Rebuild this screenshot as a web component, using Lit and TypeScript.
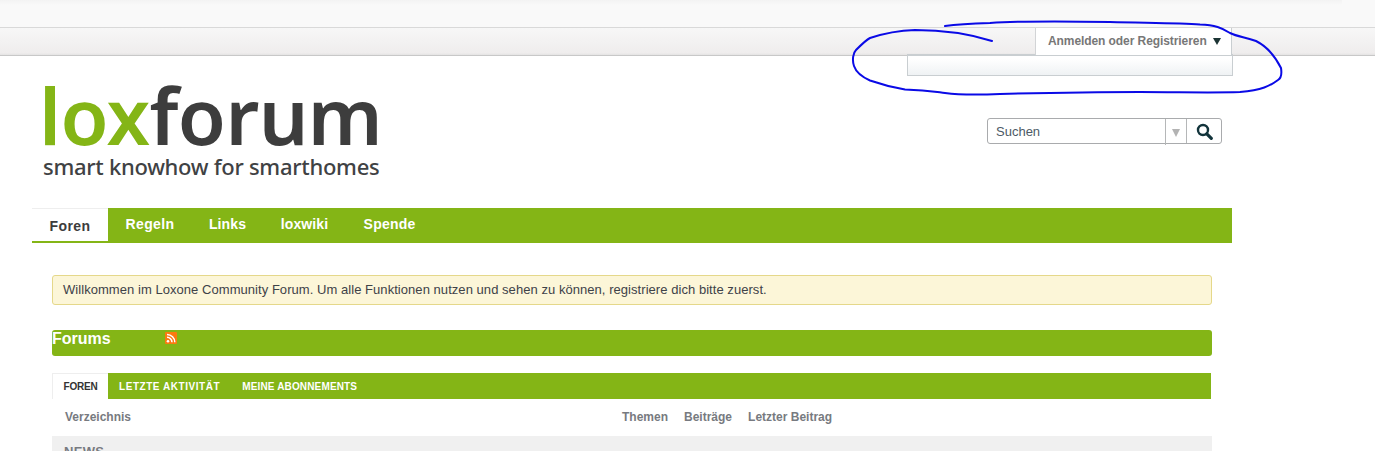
import { LitElement, html, css, svg } from "lit";
import { customElement } from "lit/decorators.js";

const SCRIBBLE =
  "M945 26 C960 24 975 23.5 990 23 C1020 21 1060 21 1110 22 C1150 23 1180 23 1200 24.5 C1215 25 1222 28 1230 33 C1238 37 1246 37 1256 41 C1268 47 1276 58 1281 68 C1282 74 1281 78 1278 80 C1270 86 1262 90 1240 92 C1210 93 1180 92 1140 92 C1100 92 1040 93 1000 94 C975 95 960 95 945 93 C930 91 925 90 905 89.5 C890 87 880 84 870 80.5 C860 76 856 72 854 66 C852 60 853 53 856 50 C862 44 866 40 870 38 C885 33 900 30.5 915 30 C945 30 970 34 992 41";

@customElement("app-root")
export class AppRoot extends LitElement {
  static styles = css`
    :host {
      display: block;
      position: relative;
      width: 1375px;
      height: 451px;
      overflow: hidden;
      background: #fff;
      font-family: "Liberation Sans", Arial, sans-serif;
    }
    .strip {
      height: 27px;
      background: #f9f9f9;
      border-bottom: 1px solid #d9d9d9;
    }
    .strip-shade {
      width: 1342px;
      height: 5px;
      background: linear-gradient(#f3f3f3, #f9f9f9);
    }
    .bar {
      position: relative;
      height: 27px;
      background: linear-gradient(#f7f7f7, #efeded 92%, #e4e3e3);
      border-bottom: 1px solid #c8c8c8;
    }
    .login {
      position: absolute;
      z-index: 2;
      left: 1035px;
      top: 0;
      width: 197px;
      height: 27px;
      box-sizing: border-box;
      background: #fff;
      border-left: 1px solid #d2d4d6;
      border-right: 1px solid #c9ced1;
      padding: 7px 0 0 12px;
      font-size: 12px;
      font-weight: bold;
      line-height: 13px;
      letter-spacing: -0.08px;
      color: #777;
      display: flex;
      gap: 6px;
    }
    .arrow {
      width: 0;
      height: 0;
      margin-top: 3px;
      border-left: 4px solid transparent;
      border-right: 4px solid transparent;
      border-top: 7px solid #1c3434;
    }
    .dropdown {
      position: absolute;
      z-index: 1;
      left: 907px;
      top: 26px;
      width: 326px;
      height: 22px;
      box-sizing: border-box;
      background: linear-gradient(#fff 15%, #eff2f4);
      border: 1px solid #c9ced1;
      border-top-width: 2px;
    }
    .page {
      width: 1200px;
      margin-left: 32px;
    }
    .head {
      height: 152px;
      display: flex;
      justify-content: space-between;
      align-items: flex-start;
    }
    .logo {
      padding: 24px 0 0 11px;
      font-family: "Noto Sans", "Open Sans", sans-serif;
    }
    .logo-main {
      font-size: 78px;
      line-height: 70px;
      font-weight: 600;
      letter-spacing: -0.6px;
      color: #3d3d3d;
      margin-left: -4px;
    }
    .logo-main span {
      color: #84b516;
    }
    .logo-sub {
      font-size: 22px;
      line-height: 26px;
      font-weight: 500;
      letter-spacing: -0.28px;
      color: #3f4244;
      margin-top: 3px;
    }
    .search {
      margin: 62px 10px 0 0;
      width: 235px;
      height: 26px;
      box-sizing: border-box;
      border: 1px solid #a9abad;
      border-radius: 3px;
      display: flex;
      font-size: 13px;
      color: #4d5a66;
      background: #fff;
    }
    .search-text {
      flex: 1;
      padding-left: 8px;
      line-height: 25px;
    }
    .search-drop {
      width: 20px;
      margin-bottom: -2px;
      border-left: 1px solid #b5b7b8;
      display: flex;
      align-items: center;
      justify-content: center;
    }
    .search-drop i {
      width: 0;
      height: 0;
      margin-top: 2px;
      border-left: 4px solid transparent;
      border-right: 4px solid transparent;
      border-top: 8px solid #b3b3b3;
    }
    .search-btn {
      width: 34px;
      border-left: 1px solid #b5b7b8;
      display: flex;
      align-items: center;
      justify-content: center;
    }
    nav {
      display: flex;
      height: 35px;
      background: #84b516;
      font-size: 14px;
      font-weight: bold;
      letter-spacing: 0.4px;
      color: #fff;
    }
    nav a {
      text-align: center;
      line-height: 32px;
    }
    nav a.w-foren { width: 76px; }
    nav a.w-regeln { width: 84px; }
    nav a.w-links { width: 71px; letter-spacing: 0.1px; }
    nav a.w-wiki { width: 83px; letter-spacing: 0.1px; }
    nav a.w-spende { width: 87px; letter-spacing: 0.2px; }
    nav a.on {
      height: 33px;
      background: #fff;
      color: #3c3c3c;
      line-height: 34px;
      border-top: 1px solid #eee;
      box-sizing: border-box;
    }
    .content {
      padding: 32px 20px 0;
    }
    .notice {
      height: 30px;
      box-sizing: border-box;
      background: #fcf6d8;
      border: 1px solid #e5d88a;
      border-radius: 3px;
      padding-left: 10px;
      font-size: 13px;
      letter-spacing: 0.05px;
      line-height: 28px;
      color: #3e4248;
    }
    .forums {
      margin-top: 25px;
      height: 26px;
      background: #84b516;
      border-radius: 3px;
      display: flex;
      align-items: flex-start;
      color: #fff;
      font-size: 16px;
      font-weight: bold;
      line-height: 18px;
    }
    .forums b {
      width: 113px;
    }
    .rss {
      margin-top: 2px;
    }
    .tabs {
      margin: 17px 1px 0 0;
      height: 26px;
      background: #84b516;
      display: flex;
      font-size: 10px;
      font-weight: bold;
      color: #fff;
      text-transform: uppercase;
    }
    .tabs a {
      padding: 0 11px;
      line-height: 27px;
    }
    .tabs a.t-recent { letter-spacing: 0.55px; }
    .tabs a.t-subs { letter-spacing: 0.15px; }
    .tabs a.on {
      width: 56px;
      padding: 0;
      text-align: center;
      background: #fff;
      color: #333;
      box-sizing: border-box;
      border-top: 1px solid #eee;
      border-left: 1px solid #eee;
      line-height: 25px;
      letter-spacing: -0.2px;
    }
    .cols {
      display: flex;
      gap: 16px;
      height: 37px;
      padding-left: 13px;
      font-size: 12px;
      font-weight: bold;
      line-height: 36px;
      color: #777a80;
    }
    .cols .dir {
      width: 541px;
    }
    .news {
      height: 40px;
      background: #f0f0f0;
      padding: 8px 0 0 12px;
      font-size: 13px;
      font-weight: bold;
      color: #777a80;
      letter-spacing: 0.3px;
    }
    .scribble {
      position: absolute;
      z-index: 3;
      left: 0;
      top: 0;
      pointer-events: none;
    }
  `;

  render() {
    return html`
      <div class="strip"><div class="strip-shade"></div></div>
      <div class="bar">
        <div class="login">Anmelden oder Registrieren <span class="arrow"></span></div>
        <div class="dropdown"></div>
      </div>
      <div class="page">
        <header class="head">
          <div class="logo">
            <div class="logo-main"><span>lox</span>forum</div>
            <div class="logo-sub">smart knowhow for smarthomes</div>
          </div>
          <div class="search">
            <div class="search-text">Suchen</div>
            <div class="search-drop"><i></i></div>
            <div class="search-btn">
              <svg width="17" height="17" viewBox="0 0 17 17" fill="none" stroke="#12343b">
                <circle cx="7" cy="7" r="5" stroke-width="2.4"></circle>
                <path d="M10.8 10.8 L15.3 15.3" stroke-width="3.2" stroke-linecap="round"></path>
              </svg>
            </div>
          </div>
        </header>
        <nav>
          <a class="on w-foren">Foren</a><a class="w-regeln">Regeln</a><a class="w-links">Links</a><a class="w-wiki">loxwiki</a><a class="w-spende">Spende</a>
        </nav>
        <div class="content">
          <div class="notice">
            Willkommen im Loxone Community Forum. Um alle Funktionen nutzen und sehen zu können, registriere dich bitte zuerst.
          </div>
          <div class="forums">
            <b>Forums</b>
            <svg class="rss" width="12" height="12" viewBox="0 0 12 12">
              <rect width="12" height="12" rx="1" fill="#fa7a10"></rect>
              <circle cx="3" cy="9.2" r="1.3" fill="#fff"></circle>
              <path d="M2 5.2 A5 5 0 0 1 7 10.2 M2 2.4 A7.8 7.8 0 0 1 9.8 10.2" fill="none" stroke="#fff" stroke-width="1.5"></path>
            </svg>
          </div>
          <div class="tabs">
            <a class="on">Foren</a><a class="t-recent">Letzte Aktivität</a><a class="t-subs">Meine Abonnements</a>
          </div>
          <div class="cols">
            <span class="dir">Verzeichnis</span>
            <span>Themen</span><span>Beiträge</span><span>Letzter Beitrag</span>
          </div>
          <div class="news">NEWS</div>
        </div>
      </div>
      <svg class="scribble" width="1375" height="451" viewBox="0 0 1375 451" fill="none">
        ${svg`<path d=${SCRIBBLE} stroke="#0a0ae6" stroke-width="2" stroke-linecap="round" stroke-linejoin="round"></path>`}
      </svg>
    `;
  }
}
